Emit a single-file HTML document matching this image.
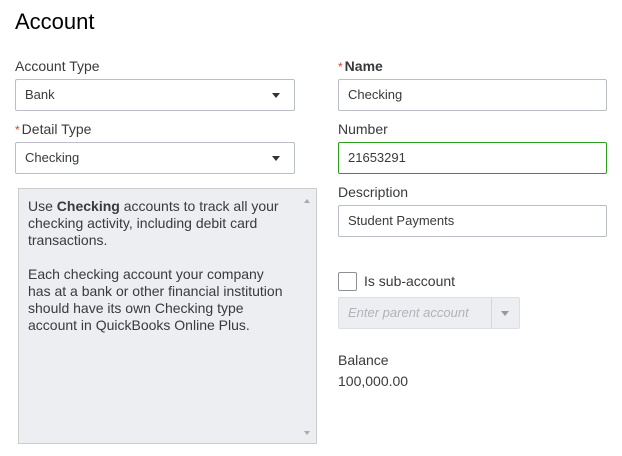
<!DOCTYPE html><html><head><style>
body{margin:0;width:622px;height:456px;background:#fff;font-family:"Liberation Sans",sans-serif;color:#393a3d;position:relative;overflow:hidden}
.a{position:absolute}
.t{left:15px;top:9px;font-size:22px;color:#000}
.l{font-size:14px;color:#393a3d}
.s{color:#e4402b;font-size:12px;margin-right:2px}
.b{border:1px solid #babec5;border-radius:2px;box-sizing:border-box;font-size:13px;padding-left:9px;line-height:29px;color:#393a3d;background:#fff}
.arr{position:absolute;right:14px;top:13px;width:0;height:0;border-left:4px solid transparent;border-right:4px solid transparent;border-top:5px solid #333}
</style></head><body>
<div class="a t">Account</div>
<div class="a l" style="left:15px;top:58px">Account Type</div>
<div class="a b" style="left:15px;top:79px;width:280px;height:32px">Bank<div class="arr"></div></div>
<div class="a l" style="left:15px;top:121px"><span class="s">*</span>Detail Type</div>
<div class="a b" style="left:15px;top:142px;width:280px;height:32px">Checking<div class="arr"></div></div>
<div class="a" style="left:18px;top:188px;width:299px;height:256px;box-sizing:border-box;border:1px solid #ccc;background:#eceef1;font-size:14px;line-height:17px;padding:9px 0 0 9px;color:#393a3d;white-space:nowrap">Use <b>Checking</b> accounts to track all your<br>checking activity, including debit card<br>transactions.<br><br>Each checking account your company<br>has at a bank or other financial institution<br>should have its own Checking type<br>account in QuickBooks Online Plus.
<div style="position:absolute;right:6px;top:10px;border-left:3px solid transparent;border-right:3px solid transparent;border-bottom:4px solid #aaa"></div>
<div style="position:absolute;right:6px;bottom:8px;border-left:3px solid transparent;border-right:3px solid transparent;border-top:4px solid #aaa"></div></div>
<div class="a l" style="left:338px;top:58px"><span class="s">*</span><b>Name</b></div>
<div class="a b" style="left:338px;top:79px;width:269px;height:32px">Checking</div>
<div class="a l" style="left:338px;top:121px">Number</div>
<div class="a b" style="left:338px;top:142px;width:269px;height:32px;border-color:#2ca01c">21653291</div>
<div class="a l" style="left:338px;top:184px">Description</div>
<div class="a b" style="left:338px;top:205px;width:269px;height:32px">Student Payments</div>
<div class="a" style="left:338px;top:272px;width:19px;height:19px;border:1px solid #8d9096;border-radius:2px;box-sizing:border-box"></div>
<div class="a l" style="left:364px;top:273px">Is sub-account</div>
<div class="a b" style="left:338px;top:297px;width:182px;height:32px;background:#eceef1;border-color:#dcdfe3;color:#b0b3b8;font-style:italic;font-size:13px">Enter parent account
<div style="position:absolute;left:152px;top:0;width:1px;height:30px;background:#d4d7dc"></div>
<div style="position:absolute;right:10px;top:13px;border-left:4px solid transparent;border-right:4px solid transparent;border-top:5px solid #999"></div></div>
<div class="a l" style="left:338px;top:352px">Balance</div>
<div class="a" style="left:338px;top:373px;font-size:14px">100,000.00</div>
</body></html>
